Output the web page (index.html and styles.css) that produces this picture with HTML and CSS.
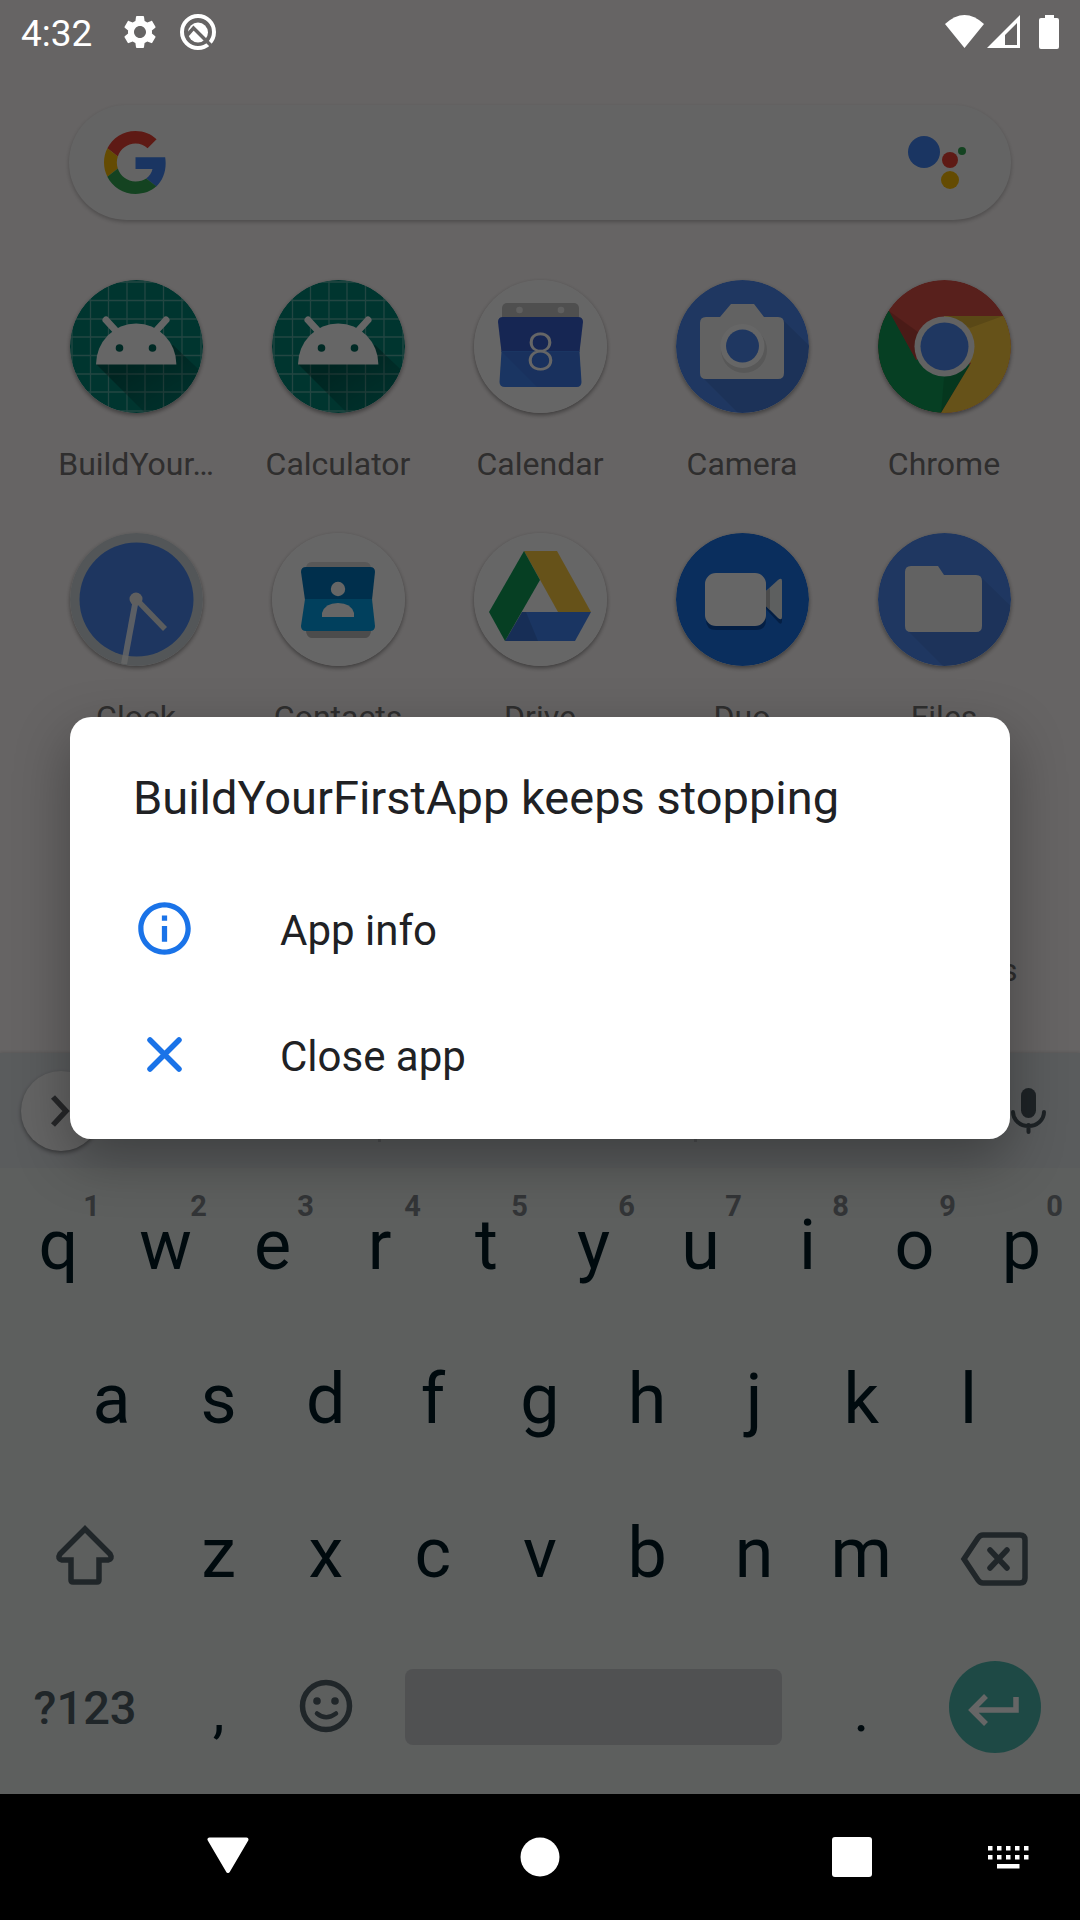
FILE: index.html
```html
<!DOCTYPE html>
<html lang="en">
<head>
<meta charset="utf-8">
<meta name="viewport" content="width=device-width, initial-scale=1">
<title>BuildYourFirstApp keeps stopping</title>
<link rel="stylesheet" href="styles.css">
</head>
<body>
<div class="stage">
  <header class="status">
    <span class="clock">4:32</span>
    <svg class="status-gear" viewBox="0 0 24 24" aria-label="Settings"><path fill="#fff" d="M19.14 12.94c.04-.3.06-.61.06-.94 0-.32-.02-.64-.07-.94l2.03-1.58c.18-.14.23-.41.12-.61l-1.92-3.32c-.12-.22-.37-.29-.59-.22l-2.39.96c-.5-.38-1.03-.7-1.62-.94L14.4 2.81c-.04-.24-.24-.41-.48-.41h-3.84c-.24 0-.43.17-.47.41l-.36 2.54c-.59.24-1.13.57-1.62.94l-2.39-.96c-.22-.08-.47 0-.59.22L2.74 8.87c-.12.21-.08.47.12.61l2.03 1.58c-.05.3-.09.63-.09.94s.02.64.07.94l-2.03 1.58c-.18.14-.23.41-.12.61l1.92 3.32c.12.22.37.29.59.22l2.39-.96c.5.38 1.03.7 1.62.94l.36 2.54c.05.24.24.41.48.41h3.84c.24 0 .44-.17.47-.41l.36-2.54c.59-.24 1.13-.56 1.62-.94l2.39.96c.22.08.47 0 .59-.22l1.92-3.32c.12-.22.07-.47-.12-.61l-2.01-1.58zM12 15.6c-1.98 0-3.6-1.62-3.6-3.6s1.62-3.6 3.6-3.6 3.600 1.620 3.600 3.600-1.620 3.600-3.600 3.600z"/></svg>
    <svg class="status-q" viewBox="0 0 36 36" aria-label="System notification">
      <mask id="q-cut"><rect width="36" height="36" fill="#fff"/><path d="M7 21.500L13.500 14L31 31.500" fill="none" stroke="#000" stroke-width="3.500"/></mask>
      <g mask="url(#q-cut)"><circle cx="18" cy="18" r="16" fill="none" stroke="#fff" stroke-width="4"/><circle cx="18" cy="18.500" r="10" fill="#fff"/></g>
    </svg>
    <span class="spacer"></span>
    <svg class="status-radio" viewBox="0 0 76 36" aria-label="Wi-Fi and mobile signal">
      <path d="M0 10Q19.500-8 39 10L19.500 34z" fill="#fff"/>
      <path fill-rule="evenodd" d="M42 34L75 1V34zM60 31H72V9L60 21z" fill="#fff"/>
    </svg>
    <svg class="status-battery" viewBox="0 0 20 36" aria-label="Battery"><path d="M6 1h9v3h3a2 2 0 0 1 2 2v27a2 2 0 0 1-2 2H2a2 2 0 0 1-2-2V6a2 2 0 0 1 2-2h4z" fill="#fff"/></svg>
  </header>

  <main class="launcher">
    <form class="search">
      <svg class="g-logo" viewBox="0 0 48 48" aria-hidden="true">
        <path fill="#ea4335" d="M24 9.500c3.540 0 6.710 1.220 9.210 3.600l6.850-6.850C35.900 2.380 30.470 0 24 0 14.620 0 6.510 5.380 2.560 13.220l7.980 6.190C12.430 13.720 17.740 9.500 24 9.500z"/>
        <path fill="#4285f4" d="M46.980 24.550c0-1.570-.15-3.090-.38-4.550H24v9.020h12.940c-.58 2.960-2.260 5.480-4.780 7.180l7.730 6c4.510-4.180 7.090-10.360 7.090-17.650z"/>
        <path fill="#fbbc05" d="M10.530 28.590c-.48-1.450-.76-2.990-.76-4.590s.27-3.140.76-4.590l-7.980-6.190C.92 16.460 0 20.120 0 24c0 3.880.92 7.540 2.560 10.780l7.970-6.190z"/>
        <path fill="#34a853" d="M24 48c6.480 0 11.930-2.130 15.890-5.810l-7.730-6c-2.150 1.450-4.920 2.300-8.160 2.300-6.260 0-11.570-4.220-13.470-9.910l-7.980 6.190C6.510 42.620 14.620 48 24 48z"/>
      </svg>
      <input class="search-input" type="search" aria-label="Search">
      <svg class="assistant" viewBox="0 0 60 60" aria-hidden="true">
        <circle cx="17" cy="19" r="16" fill="#4285f4"/><circle cx="43" cy="27" r="8" fill="#ea4335"/><circle cx="43" cy="47" r="9" fill="#fbbc05"/><circle cx="55" cy="18" r="4" fill="#34a853"/>
      </svg>
    </form>

    <svg width="0" height="0" class="defs" aria-hidden="true">
      <defs>
        <clipPath id="disc"><circle cx="66.500" cy="66.500" r="66.500"/></clipPath>
        <linearGradient id="fade" x1="0" y1="0" x2="1" y2="1"><stop offset="0.300" stop-color="#000" stop-opacity=".3"/><stop offset="1" stop-color="#000" stop-opacity="0"/></linearGradient>
        <symbol id="android" viewBox="0 0 133 133">
          <g clip-path="url(#disc)">
            <rect width="133" height="133" fill="#008577"/>
            <path d="M2 0V133M20.500 0V133M38.500 0V133M57 0V133M75 0V133M93.500 0V133M112 0V133M131 0V133M0 2H133M0 20.500H133M0 39H133M0 57H133M0 75.500H133M0 94H133M0 112H133M0 131H133" stroke="#fff" stroke-opacity=".35" stroke-width="1.300"/>
            <path d="M26 84L78 136L140 136V100L103 65z" fill="url(#fade)"/>
          </g>
          <path d="M26 84.500a40.200 41 0 0 1 80.400 0z" fill="#fff"/>
          <path d="M36 40l11 12M96 40l-11 12" stroke="#fff" stroke-width="7" stroke-linecap="round"/>
          <circle cx="49.500" cy="68" r="3.800" fill="#00695c"/><circle cx="82.500" cy="68" r="3.800" fill="#00695c"/>
        </symbol>
      </defs>
    </svg>

    <nav class="apps" aria-label="Apps">
      <a class="app" href="#"><svg class="app-icon" viewBox="0 0 133 133"><use href="#android"/></svg><span class="app-label">BuildYour…</span></a>
      <a class="app" href="#"><svg class="app-icon" viewBox="0 0 133 133"><use href="#android"/></svg><span class="app-label">Calculator</span></a>
      <a class="app" href="#"><svg class="app-icon" viewBox="0 0 133 133">
        <circle cx="66.500" cy="66.500" r="66.500" fill="#fff"/>
        <path d="M28 40V28a5 5 0 0 1 5-5h67a5 5 0 0 1 5 5v12z" fill="#c6c6c6"/>
        <circle cx="45.500" cy="30" r="3.300" fill="#eee"/><circle cx="87" cy="30" r="3.300" fill="#eee"/>
        <path d="M24 42q0-5 5-5h75q5 0 5 5L105.500 72H27.500z" fill="#395fd0"/>
        <path d="M27.500 71h78l2 31q0 5-5 5H31q-5.500 0-5.500-5z" fill="#4285f4"/>
        <path d="M28 72l35 35h39q5 0 5-5l-2-30z" fill="#395fd0" opacity=".25"/>
        <text class="calendar-day" x="66.500" y="90">8</text></svg><span class="app-label">Calendar</span></a>
      <a class="app" href="#"><svg class="app-icon" viewBox="0 0 133 133">
        <g clip-path="url(#disc)"><rect width="133" height="133" fill="#4f8bf2"/><path d="M26 97L64 135H140V72L107 40z" fill="#000" opacity=".09"/></g>
        <path d="M30 37H44L55 24H78L88 37H102q6 0 6 6V93q0 6-6 6H30q-6 0-6-6V43q0-6 6-6z" fill="#f5f5f5"/>
        <circle cx="68" cy="70" r="23" fill="#000" opacity=".1"/>
        <circle cx="66.500" cy="66" r="22" fill="#fff"/><circle cx="66.500" cy="66" r="16.500" fill="#4f8bf2"/></svg><span class="app-label">Camera</span></a>
      <a class="app" href="#"><svg class="app-icon" viewBox="0 0 133 133">
        <g clip-path="url(#disc)"><rect width="133" height="133" fill="#db5046"/>
        <path d="M11 31L38 80L66 66L92 85L63 133H-2V31z" fill="#0f9d58"/>
        <path d="M66 36H133V133H63L93 83L66 66z" fill="#ffcd40"/>
        <path d="M70 36H125L92 48z" fill="#000" opacity=".12"/><path d="M92 85L66 97L63 133z" fill="#000" opacity=".12"/><path d="M11 31L38 80L40 52z" fill="#000" opacity=".15"/></g>
        <circle cx="66.500" cy="66.500" r="30" fill="#f5f5f5"/><circle cx="66.500" cy="66.500" r="24" fill="#4f8bf2"/></svg><span class="app-label">Chrome</span></a>

      <a class="app" href="#"><svg class="app-icon" viewBox="0 0 133 133">
        <circle cx="66.500" cy="66.500" r="66.500" fill="#cfd8dc"/><circle cx="66.500" cy="66.500" r="57" fill="#4b87f0"/>
        <path d="M66 66L54 131" stroke="#fff" stroke-opacity=".85" stroke-width="6"/><path d="M66 66L95 96" stroke="#e4e9ec" stroke-width="5.500"/><circle cx="66" cy="66" r="6.500" fill="#eee"/></svg><span class="app-label">Clock</span></a>
      <a class="app" href="#"><svg class="app-icon" viewBox="0 0 133 133">
        <circle cx="66.500" cy="66.500" r="66.500" fill="#fff"/>
        <path d="M34 36q0-7 6-7H93q6 0 6 7V98q-1 7-6 7H40q-5 0-6-7z" fill="#dcdcdc"/><path d="M34 98h65q-1 7-6 7H40q-5 0-6-7z" fill="#bdbdbd"/>
        <path d="M29 39q0-5 5-5H98q5 0 5 5L100 67H33z" fill="#0277bd"/><path d="M33 66H100L103 93q0 5-5 5H34q-5 0-5-5z" fill="#03a0e8"/>
        <circle cx="66" cy="56" r="7.200" fill="#fff"/><path d="M50 84V80Q53 70 66 70T82 80V84z" fill="#fff"/></svg><span class="app-label">Contacts</span></a>
      <a class="app" href="#"><svg class="app-icon" viewBox="0 0 133 133">
        <circle cx="66.500" cy="66.500" r="66.500" fill="#fff"/>
        <path d="M50 18H83L117 79H84z" fill="#ffcd40"/><path d="M48 79H117L101 108H31z" fill="#4285f4"/><path d="M50 18L66 47L31 108L15 79z" fill="#0f9d58"/><path d="M48 79h4l12 29H31z" fill="#000" opacity=".12"/></svg><span class="app-label">Drive</span></a>
      <a class="app" href="#"><svg class="app-icon" viewBox="0 0 133 133">
        <circle cx="66.500" cy="66.500" r="66.500" fill="#1a73e8"/>
        <path d="M40 45H80q10 0 10 10V87q0 10-10 10H40q-10 0-10-10V55q0-10 10-10zM90 66L103 51q3-2 3 2V88q0 4-3 2L90 76z" fill="#0b4fab"/>
        <path d="M90 58L102 47q4-3 4 1V84q0 4-4 1L90 73z" fill="#e8eeee"/><path d="M90 58l4-3v22l-4-4z" fill="#bbb"/>
        <rect x="29" y="40" width="61" height="53" rx="11" fill="#fff"/></svg><span class="app-label">Duo</span></a>
      <a class="app" href="#"><svg class="app-icon" viewBox="0 0 133 133">
        <g clip-path="url(#disc)"><rect width="133" height="133" fill="#4f8bf2"/><path d="M29 97L67 135H140V80L103 44z" fill="#000" opacity=".07"/></g>
        <path d="M33 33H60L66 42H98q6 0 6 6V93q0 6-6 6H33q-6 0-6-6V39q0-6 6-6z" fill="#f5f5f5"/></svg><span class="app-label">Files</span></a>

      <a class="app app-last" href="#"><svg class="app-icon app-icon-flat" viewBox="0 0 133 133"><circle cx="66.500" cy="66.500" r="62" fill="#4285f4"/></svg><span class="app-label">Messages</span></a>
    </nav>
  </main>

  <section class="keyboard" aria-label="Keyboard">
    <div class="strip">
      <div class="strip-cell"><button class="expand" type="button" aria-label="Expand toolbar"><svg viewBox="0 0 80 80"><path d="M32 26L45 40L32 54" fill="none" stroke="#5f6366" stroke-width="5.500"/></svg></button></div>
      <div class="strip-cell"></div>
      <div class="strip-cell strip-end"><button class="mic" type="button" aria-label="Voice input"><svg viewBox="0 0 36 48"><rect x="11" y="1" width="15" height="30" rx="7.500" fill="#4b5960"/><path d="M3 25a15.500 14 0 0 0 31 0M18.500 38v7" fill="none" stroke="#4b5960" stroke-width="4" stroke-linecap="round"/></svg></button></div>
    </div>
    <div class="row">
      <button class="key" type="button">q<span class="hint">1</span></button>
      <button class="key" type="button">w<span class="hint">2</span></button>
      <button class="key" type="button">e<span class="hint">3</span></button>
      <button class="key" type="button">r<span class="hint">4</span></button>
      <button class="key" type="button">t<span class="hint">5</span></button>
      <button class="key" type="button">y<span class="hint">6</span></button>
      <button class="key" type="button">u<span class="hint">7</span></button>
      <button class="key" type="button">i<span class="hint">8</span></button>
      <button class="key" type="button">o<span class="hint">9</span></button>
      <button class="key" type="button">p<span class="hint">0</span></button>
    </div>
    <div class="row row-inset">
      <button class="key" type="button">a</button>
      <button class="key" type="button">s</button>
      <button class="key" type="button">d</button>
      <button class="key" type="button">f</button>
      <button class="key" type="button">g</button>
      <button class="key" type="button">h</button>
      <button class="key" type="button">j</button>
      <button class="key" type="button">k</button>
      <button class="key" type="button">l</button>
    </div>
    <div class="row">
      <button class="key key-wide" type="button" aria-label="Shift"><svg class="key-icon" viewBox="0 0 72 72"><path d="M36 12L61 37Q64 42 59 43H50V63Q50 65 48 65H24Q22 65 22 63V43H13Q8 42 11 37z" fill="none" stroke="#505f67" stroke-width="5.500"/></svg></button>
      <button class="key" type="button">z</button>
      <button class="key" type="button">x</button>
      <button class="key" type="button">c</button>
      <button class="key" type="button">v</button>
      <button class="key" type="button">b</button>
      <button class="key" type="button">n</button>
      <button class="key" type="button">m</button>
      <button class="key key-wide" type="button" aria-label="Backspace"><svg class="key-icon" viewBox="0 0 72 72"><path d="M24 18H61Q66 18 66 23V61Q66 66 61 66H24Q21 66 19 63L5 42L19 21Q21 18 24 18zM31 33L48 51M48 33L31 51" fill="none" stroke="#505f67" stroke-width="5.500" stroke-linecap="round"/></svg></button>
    </div>
    <div class="row">
      <button class="key key-wide key-symbols" type="button">?123</button>
      <button class="key key-mark" type="button">,</button>
      <button class="key" type="button" aria-label="Emoji"><svg class="key-icon" viewBox="0 0 72 72"><circle cx="36" cy="35" r="23.500" fill="none" stroke="#505f67" stroke-width="5.500"/><circle cx="27" cy="30" r="3.800" fill="#505f67"/><circle cx="45" cy="30" r="3.800" fill="#505f67"/><path d="M27 42.500Q36 50 46 42.500" fill="none" stroke="#505f67" stroke-width="4.500" stroke-linecap="round"/></svg></button>
      <button class="key key-space" type="button" aria-label="Space"><span class="space-bar"></span></button>
      <button class="key key-mark" type="button">.</button>
      <button class="key key-wide" type="button" aria-label="Enter"><svg class="enter-icon" viewBox="0 0 92 92"><circle cx="46" cy="46" r="46" fill="#4db6ac"/><path d="M67 36V49H25M37 35L23 49L37 63" fill="none" stroke="#fff" stroke-width="5.500"/></svg></button>
    </div>
  </section>

  <div class="scrim">
    <section class="dialog" role="dialog" aria-labelledby="dialog-title">
      <h1 class="dialog-title" id="dialog-title">BuildYourFirstApp keeps stopping</h1>
      <button class="dialog-item" type="button"><svg class="dialog-icon" viewBox="0 0 24 24"><path fill="#1a73e8" d="M11 7h2v2h-2zm0 4h2v6h-2zm1-9C6.480 2 2 6.480 2 12s4.480 10 10 10 10-4.480 10-10S17.520 2 12 2zm0 18c-4.410 0-8-3.590-8-8s3.590-8 8-8 8 3.590 8 8-3.590 8-8 8z"/></svg><span class="dialog-label">App info</span></button>
      <button class="dialog-item" type="button"><svg class="dialog-icon" viewBox="0 0 63 63"><path d="M17 17L46 46M46 17L17 46" stroke="#1a73e8" stroke-width="5.500" stroke-linecap="round"/></svg><span class="dialog-label">Close app</span></button>
    </section>
  </div>
</div>

<footer class="navbar">
  <button class="nav-button nav-back" type="button" aria-label="Back"><svg viewBox="0 0 42 42"><path d="M2.500 3.500H39.500L21 35z" fill="#fff" stroke="#fff" stroke-width="4" stroke-linejoin="round"/></svg></button>
  <button class="nav-button" type="button" aria-label="Home"><svg viewBox="0 0 42 42"><circle cx="21" cy="21" r="19.500" fill="#fff"/></svg></button>
  <button class="nav-button" type="button" aria-label="Recent apps"><svg viewBox="0 0 42 42"><rect x="1" y="1" width="40" height="40" rx="3" fill="#fff"/></svg></button>
  <button class="nav-button" type="button" aria-label="Switch keyboard"><svg viewBox="0 0 42 42"><path d="M1 10h4.500v4.500H1zM10 10h4.500v4.500H10zM19 10h4.500v4.500H19zM28 10h4.500v4.500H28zM37 10h4.500v4.500H37zM1 19h4.500v4.500H1zM10 19h4.500v4.500H10zM19 19h4.500v4.500H19zM28 19h4.500v4.500H28zM37 19h4.500v4.500H37zM10 28h22.500v4.500H10z" fill="#fff"/></svg></button>
</footer>
</body>
</html>
```
FILE: styles.css
```css
* {
  box-sizing: border-box;
}

body {
  margin: 0;
  min-height: 100vh;
  display: flex;
  flex-direction: column;
  background: #000;
  font-family: Roboto, "Liberation Sans", sans-serif;
}

button,
input {
  border: 0;
  margin: 0;
  padding: 0;
  background: none;
  font: inherit;
  color: inherit;
}

svg {
  display: block;
}

.stage {
  position: relative;
  flex: 1;
  display: flex;
  flex-direction: column;
  background: #fffafa;
}

/* Status bar, drawn above the scrim */
.status {
  position: relative;
  z-index: 2;
  display: flex;
  align-items: center;
  height: 63px;
  padding: 0 21px;
  color: #fff;
}

.clock {
  padding-top: 4px;
  font-size: 37px;
  line-height: 44px;
}

.status-gear {
  width: 40px;
  height: 40px;
  margin-left: 28px;
}

.status-q {
  width: 36px;
  height: 36px;
  margin-left: 20px;
}

.spacer {
  flex: 1;
}

.status-radio {
  width: 76px;
  height: 36px;
  margin-right: 18px;
}

.status-battery {
  width: 20px;
  height: 36px;
}

/* Launcher */
.launcher {
  flex: 1;
  padding: 42px 35px 0;
}

.search {
  display: flex;
  align-items: center;
  height: 115px;
  margin: 0 34px 60px;
  padding: 0 44px 0 35px;
  border-radius: 58px;
  background: #fafafa;
  box-shadow: 0 2px 4px rgba(0, 0, 0, 0.25);
}

.g-logo {
  width: 63px;
  height: 63px;
}

.search-input {
  flex: 1;
  min-width: 0;
  height: 63px;
  font-size: 37px;
}

.assistant {
  width: 60px;
  height: 60px;
}

.defs {
  position: absolute;
}

.apps {
  display: grid;
  grid-template-columns: repeat(5, minmax(0, 1fr));
  row-gap: 50px;
}

.app {
  display: flex;
  flex-direction: column;
  align-items: center;
  gap: 32px;
  color: #757373;
  text-decoration: none;
}

.app-last {
  grid-column: 5;
}

.app-icon {
  width: 133px;
  height: 133px;
  border-radius: 50%;
  box-shadow: 0 2px 4px rgba(0, 0, 0, 0.4);
}

.app-icon-flat {
  box-shadow: none;
}

.app-label {
  font-size: 32px;
  line-height: 38px;
}

.calendar-day {
  font-size: 52px;
  font-weight: 300;
  text-anchor: middle;
  fill: #fff;
}

/* Keyboard */
.keyboard {
  padding-bottom: 10px;
  background: #e8edeb;
  color: #001a24;
  box-shadow: 0 -1px 3px rgba(0, 0, 0, 0.12);
}

.strip {
  display: grid;
  grid-template-columns: 381fr 316fr 383fr;
  align-items: center;
  height: 115px;
  background: #e1e5e9;
}

.strip-cell {
  display: flex;
  align-items: center;
  height: 63px;
  padding-left: 21px;
  border-right: 3px solid #c0c4c8;
}

.strip-end {
  justify-content: flex-end;
  padding-right: 34px;
  border-right: 0;
}

.expand {
  width: 80px;
  height: 80px;
  flex: none;
  border-radius: 50%;
  background: #fafafa;
  box-shadow: 0 2px 4px rgba(0, 0, 0, 0.4);
}

.mic {
  width: 36px;
  height: 48px;
}

.row {
  display: flex;
  height: 154px;
  padding: 0 5px;
}

.row-inset {
  padding: 0 58px;
}

.key {
  position: relative;
  display: flex;
  align-items: center;
  justify-content: center;
  flex: 107 1 0;
  min-width: 0;
  font-size: 70px;
}

.key-wide {
  flex-grow: 160;
}

.key-symbols {
  font-size: 47px;
  font-weight: 500;
  color: #505f67;
}

.key-mark {
  padding-top: 6px;
  font-size: 60px;
}

.hint {
  position: absolute;
  top: 23px;
  right: 12px;
  font-size: 29px;
  line-height: 30px;
  font-weight: 700;
  color: #80858a;
}

.key-icon {
  width: 72px;
  height: 72px;
}

.key-space {
  flex-grow: 428;
}

.space-bar {
  width: calc(100% - 52px);
  height: 76px;
  border-radius: 8px;
  background: #c8cace;
}

.enter-icon {
  width: 92px;
  height: 92px;
}

/* Crash dialog */
.scrim {
  position: absolute;
  inset: 0;
  z-index: 1;
  display: flex;
  align-items: center;
  padding: 61px 70px 0;
  background: rgba(0, 0, 0, 0.6);
}

.dialog {
  width: 100%;
  padding-bottom: 21px;
  border-radius: 21px;
  background: #fff;
  color: #202124;
  box-shadow: 0 20px 56px rgba(0, 0, 0, 0.32);
}

.dialog-title {
  margin: 0;
  padding: 50px 63px 37px;
  font-size: 47px;
  line-height: 62px;
  font-weight: 400;
}

.dialog-item {
  display: flex;
  align-items: center;
  gap: 84px;
  width: 100%;
  height: 126px;
  padding: 0 63px;
  text-align: left;
}

.dialog-icon {
  width: 63px;
  height: 63px;
}

.dialog-label {
  padding-top: 4px;
  font-size: 42px;
}

/* System navigation */
.navbar {
  display: grid;
  grid-template-columns: 6fr 7fr 19fr 7fr 6fr;
  height: 126px;
}

.nav-button {
  display: flex;
  align-items: center;
  justify-content: center;
}

.nav-button svg {
  width: 42px;
  height: 42px;
}

.nav-back {
  grid-column: 2;
}
```
